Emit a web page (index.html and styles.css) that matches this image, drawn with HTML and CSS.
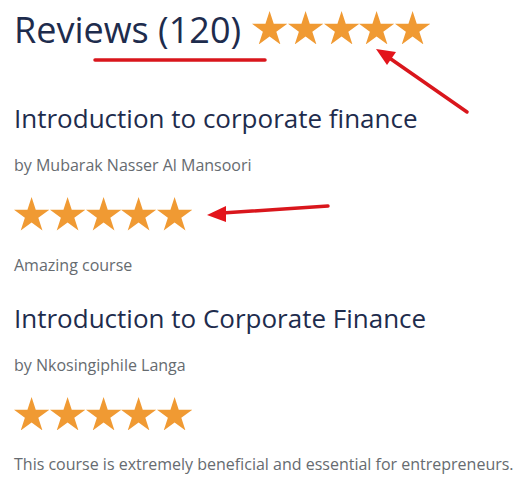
FILE: index.html
```html
<!DOCTYPE html>
<html>
<head>
<meta charset="utf-8">
<link rel="stylesheet" href="styles.css">
</head>
<body>
<svg width="0" height="0" class="defs">
  <defs>
    <polygon id="star" points="47.55,0 58.78,34.55 95.1,34.55 65.72,55.9 76.94,90.45 47.55,69.1 18.16,90.45 29.38,55.9 0,34.55 36.32,34.55"/>
  </defs>
</svg>
<div class="page">
  <header class="top">
    <h1 class="title">Reviews (120)</h1>
    <div class="stars">
      <svg class="star" viewBox="0 0 95.1 90.45"><use href="#star"/></svg>
      <svg class="star" viewBox="0 0 95.1 90.45"><use href="#star"/></svg>
      <svg class="star" viewBox="0 0 95.1 90.45"><use href="#star"/></svg>
      <svg class="star" viewBox="0 0 95.1 90.45"><use href="#star"/></svg>
      <svg class="star" viewBox="0 0 95.1 90.45"><use href="#star"/></svg>
    </div>
  </header>

  <section class="review">
    <h2 class="course">Introduction to corporate finance</h2>
    <p class="author">by Mubarak Nasser Al Mansoori</p>
    <div class="stars">
      <svg class="star" viewBox="0 0 95.1 90.45"><use href="#star"/></svg>
      <svg class="star" viewBox="0 0 95.1 90.45"><use href="#star"/></svg>
      <svg class="star" viewBox="0 0 95.1 90.45"><use href="#star"/></svg>
      <svg class="star" viewBox="0 0 95.1 90.45"><use href="#star"/></svg>
      <svg class="star" viewBox="0 0 95.1 90.45"><use href="#star"/></svg>
    </div>
    <p class="comment">Amazing course</p>
  </section>

  <section class="review">
    <h2 class="course">Introduction to Corporate Finance</h2>
    <p class="author">by Nkosingiphile Langa</p>
    <div class="stars">
      <svg class="star" viewBox="0 0 95.1 90.45"><use href="#star"/></svg>
      <svg class="star" viewBox="0 0 95.1 90.45"><use href="#star"/></svg>
      <svg class="star" viewBox="0 0 95.1 90.45"><use href="#star"/></svg>
      <svg class="star" viewBox="0 0 95.1 90.45"><use href="#star"/></svg>
      <svg class="star" viewBox="0 0 95.1 90.45"><use href="#star"/></svg>
    </div>
    <p class="comment">This course is extremely beneficial and essential for entrepreneurs.</p>
  </section>

  <svg class="marks" width="522" height="490" viewBox="0 0 522 490">
    <line x1="95" y1="60" x2="265" y2="60" class="mark-line"/>
    <line x1="467" y1="112" x2="388" y2="57" class="mark-line"/>
    <polygon points="376,49 396,52 387,65" class="mark-head"/>
    <line x1="328" y1="206" x2="222" y2="213" class="mark-line"/>
    <polygon points="207,215 226,206 226,222" class="mark-head"/>
  </svg>
</div>
</body>
</html>
```

FILE: styles.css
```css
html, body {
  margin: 0;
  padding: 0;
  background: #ffffff;
}

.defs {
  position: absolute;
  width: 0;
  height: 0;
}

.page {
  position: relative;
  width: 522px;
  height: 490px;
  overflow: hidden;
  box-sizing: border-box;
  padding: 7px 0 0 14px;
  font-family: "Open Sans", "Liberation Sans", sans-serif;
}

.top {
  display: flex;
  align-items: center;
  gap: 11px;
  height: 46px;
}

.title {
  margin: 0;
  font-size: 36px;
  line-height: 46px;
  font-weight: 400;
  color: #1e2c4d;
}

.stars {
  display: flex;
  gap: 0.6px;
}

.top .stars {
  margin-top: -5px;
}

.star {
  width: 35.2px;
  height: 33.5px;
  fill: #f09a33;
  display: block;
}

.review {
  display: flex;
  flex-direction: column;
}

.review:first-of-type {
  margin-top: 48px;
}

.review + .review {
  margin-top: 24px;
}

.course {
  margin: 0;
  font-size: 26px;
  line-height: 34px;
  font-weight: 400;
  color: #1e2c4d;
}

.author {
  margin: 18px 0 0;
  font-size: 16px;
  line-height: 24px;
  color: #666b70;
}

.review .stars {
  margin-top: 20px;
}

.comment {
  margin: 22px 0 0;
  font-size: 16px;
  line-height: 24px;
  color: #666b70;
}

.marks {
  position: absolute;
  left: 0;
  top: 0;
}

.mark-line {
  stroke: #d9161c;
  stroke-width: 3.5;
  stroke-linecap: round;
}

.mark-head {
  fill: #e3141b;
}
```
